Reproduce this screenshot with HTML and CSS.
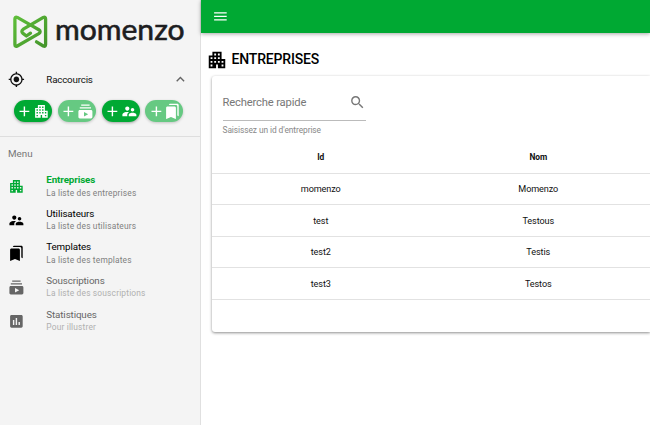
FILE: index.html
```
<!DOCTYPE html>
<html lang="fr">
<head>
    <meta charset="UTF-8">
    <meta name="viewport" content="width=device-width, initial-scale=1.0">
    <title>Momenzo - Entreprises</title>
    <link rel="stylesheet" href="styles.css">
</head>
<body>
    <svg class="defs" width="0" height="0">
        <symbol id="apartment" viewBox="0 0 24 24"><path d="M17 11V3H7v4H3v14h8v-4h2v4h8V11h-4zM7 19H5v-2h2v2zm0-4H5v-2h2v2zm0-4H5V9h2v2zm4 4H9v-2h2v2zm0-4H9V9h2v2zm0-4H9V5h2v2zm4 8h-2v-2h2v2zm0-4h-2V9h2v2zm0-4h-2V5h2v2zm4 12h-2v-2h2v2zm0-4h-2v-2h2v2z"/></symbol>
        <symbol id="users" viewBox="0 0 24 24"><path d="M16.5 12c1.38 0 2.49-1.12 2.49-2.5S17.88 7 16.5 7C15.12 7 14 8.12 14 9.5s1.12 2.5 2.5 2.5zM9 11c1.66 0 2.99-1.34 2.99-3S10.66 5 9 5C7.34 5 6 6.34 6 8s1.34 3 3 3zm7.5 3c-1.83 0-5.5.92-5.5 2.75V19h11v-2.25c0-1.83-3.67-2.75-5.5-2.75zM9 13c-2.33 0-7 1.17-7 3.5V19h7v-2.25c0-.85.33-2.34 2.37-3.47C10.5 13.1 9.66 13 9 13z"/></symbol>
        <symbol id="subscriptions" viewBox="0 0 24 24"><path d="M20 8H4V6h16v2zm-2-6H6v2h12V2zm4 10v8c0 1.1-.9 2-2 2H4c-1.1 0-2-.9-2-2v-8c0-1.1.9-2 2-2h16c1.1 0 2 .9 2 2zm-6 4l-6-3.27v6.53L16 16z"/></symbol>
        <symbol id="bookmarks" viewBox="0 0 24 24"><path d="M19 18l2 1V3c0-1.1-.9-2-2-2H8.99C7.89 1 7 1.9 7 3h10c1.1 0 2 .9 2 2v13zM15 5H5c-1.1 0-2 .9-2 2v16l7-3 7 3V7c0-1.1-.9-2-2-2z"/></symbol>
        <symbol id="stats" viewBox="0 0 24 24"><path d="M19 3H5c-1.1 0-2 .9-2 2v14c0 1.1.9 2 2 2h14c1.1 0 2-.9 2-2V5c0-1.1-.9-2-2-2zM9 17H7v-7h2v7zm4 0h-2V7h2v10zm4 0h-2v-4h2v4z"/></symbol>
        <symbol id="location" viewBox="0 0 24 24"><path d="M12 8c-2.21 0-4 1.79-4 4s1.79 4 4 4 4-1.79 4-4-1.79-4-4-4zm8.94 3c-.46-4.17-3.77-7.48-7.94-7.94V1h-2v2.06C6.83 3.52 3.52 6.83 3.06 11H1v2h2.06c.46 4.17 3.77 7.48 7.94 7.94V23h2v-2.06c4.17-.46 7.48-3.77 7.94-7.94H23v-2h-2.06zM12 19c-3.87 0-7-3.13-7-7s3.13-7 7-7 7 3.13 7 7-3.13 7-7 7z"/></symbol>
        <symbol id="chevron" viewBox="0 0 24 24"><path d="M7.41 15.41L12 10.83l4.59 4.58L18 14l-6-6-6 6z"/></symbol>
        <symbol id="plus" viewBox="0 0 24 24"><path d="M19 13h-6v6h-2v-6H5v-2h6V5h2v6h6v2z"/></symbol>
        <symbol id="search" viewBox="0 0 24 24"><path d="M15.5 14h-.79l-.28-.27C15.41 12.59 16 11.11 16 9.5 16 5.91 13.09 3 9.5 3S3 5.91 3 9.5 5.91 16 9.5 16c1.61 0 3.09-.59 4.23-1.57l.27.28v.79l5 4.99L20.49 19l-4.99-5zm-6 0C7.01 14 5 11.99 5 9.5S7.01 5 9.5 5 14 7.01 14 9.5 11.99 14 9.5 14z"/></symbol>
        <symbol id="menu" viewBox="0 0 24 24"><path d="M3 18h18v-2H3v2zm0-5h18v-2H3v2zm0-7v2h18V6H3z"/></symbol>
    </svg>

    <aside class="sidebar">
        <svg class="logo" width="200" height="63" viewBox="0 0 200 63">
            <defs>
                <linearGradient id="leaf" gradientUnits="userSpaceOnUse" x1="14" y1="16" x2="47" y2="47">
                    <stop offset="0" stop-color="#5fbf3a"/>
                    <stop offset="1" stop-color="#43932b"/>
                </linearGradient>
            </defs>
            <g fill="none" stroke="url(#leaf)" stroke-width="3.3" stroke-linecap="round" stroke-linejoin="round">
                <path d="M36.5 41.8L43.3 46Q45.6 47 45.6 44.5V19Q45.6 16.3 43.3 17.4L23.3 29.2Q20.6 31.4 23 33.4L26.4 36L30.5 33.2"/>
                <path d="M30 24.6L17.3 17.4Q14.9 16.3 14.9 19V44.5Q14.9 47.2 17.3 46L38.8 33.6Q41.5 31.6 38.8 29.7L30 24.6"/>
            </g>
            <text class="wordmark" x="55" y="39.5" textLength="129.5" lengthAdjust="spacingAndGlyphs">momenzo</text>
        </svg>

        <div class="shortcuts-header">
            <svg class="icon"><use href="#location"/></svg>
            <span>Raccourcis</span>
            <svg class="icon chevron"><use href="#chevron"/></svg>
        </div>
        <div class="shortcuts">
            <button class="pill"><svg><use href="#plus"/></svg><svg><use href="#apartment"/></svg></button>
            <button class="pill disabled"><svg><use href="#plus"/></svg><svg><use href="#subscriptions"/></svg></button>
            <button class="pill"><svg><use href="#plus"/></svg><svg><use href="#users"/></svg></button>
            <button class="pill disabled"><svg><use href="#plus"/></svg><svg><use href="#bookmarks"/></svg></button>
        </div>

        <nav class="menu">
            <div class="menu-label">Menu</div>
            <a class="item active">
                <svg class="icon"><use href="#apartment"/></svg>
                <div><div class="title">Entreprises</div><div class="subtitle">La liste des entreprises</div></div>
            </a>
            <a class="item">
                <svg class="icon"><use href="#users"/></svg>
                <div><div class="title">Utilisateurs</div><div class="subtitle">La liste des utilisateurs</div></div>
            </a>
            <a class="item">
                <svg class="icon"><use href="#bookmarks"/></svg>
                <div><div class="title">Templates</div><div class="subtitle">La liste des templates</div></div>
            </a>
            <a class="item disabled">
                <svg class="icon"><use href="#subscriptions"/></svg>
                <div><div class="title">Souscriptions</div><div class="subtitle">La liste des souscriptions</div></div>
            </a>
            <a class="item disabled">
                <svg class="icon"><use href="#stats"/></svg>
                <div><div class="title">Statistiques</div><div class="subtitle">Pour illustrer</div></div>
            </a>
        </nav>
    </aside>

    <div class="content">
        <header class="toolbar">
            <svg class="icon"><use href="#menu"/></svg>
        </header>
        <main>
            <h1><svg><use href="#apartment"/></svg>ENTREPRISES</h1>
            <section class="card">
                <div class="search">
                    <div class="search-field">
                        <span>Recherche rapide</span>
                        <svg class="icon"><use href="#search"/></svg>
                    </div>
                    <div class="hint">Saisissez un id d'entreprise</div>
                </div>
                <table>
                    <thead>
                        <tr><th>Id</th><th>Nom</th><th class="rest"></th></tr>
                    </thead>
                    <tbody>
                        <tr><td>momenzo</td><td>Momenzo</td><td></td></tr>
                        <tr><td>test</td><td>Testous</td><td></td></tr>
                        <tr><td>test2</td><td>Testis</td><td></td></tr>
                        <tr><td>test3</td><td>Testos</td><td></td></tr>
                    </tbody>
                </table>
            </section>
        </main>
    </div>
</body>
</html>
```
FILE: styles.css
```
* {
    box-sizing: border-box;
}

body {
    margin: 0;
    height: 425px;
    display: flex;
    overflow: hidden;
    font-family: Roboto, "Liberation Sans", sans-serif;
    color: #111;
    background-color: #fff;
}

svg {
    display: block;
    fill: currentColor;
    flex-shrink: 0;
}

.defs {
    position: absolute;
}

.icon {
    width: 16.8px;
    height: 16.8px;
}

/* Sidebar */
.sidebar {
    width: 201px;
    flex-shrink: 0;
    background-color: #f4f4f4;
    border-right: 1px solid #e0e0e0;
}

.wordmark {
    font-family: Lato, sans-serif;
    font-size: 29px;
    fill: #1d1d1f;
    stroke: #1d1d1f;
    stroke-width: 0.6px;
}

.shortcuts-header {
    display: flex;
    align-items: center;
    height: 33px;
    padding: 0 11px 0 8px;
    font-size: 9.8px;
    letter-spacing: -0.2px;
}

.shortcuts-header span {
    flex: 1;
    margin-left: 21.5px;
}

.shortcuts-header .chevron {
    color: #666;
}

.shortcuts {
    display: flex;
    gap: 5.8px;
    height: 41px;
    padding: 4px 0 0 14px;
    border-bottom: 1px solid #dedede;
}

.pill {
    display: flex;
    align-items: center;
    justify-content: center;
    width: 38px;
    height: 22px;
    padding: 0;
    border: none;
    border-radius: 11px;
    color: #fff;
    background-color: #00a933;
    box-shadow: 0 1px 3px rgba(0, 0, 0, 0.35);
}

.pill svg {
    width: 16.8px;
    height: 16.8px;
}

.pill.disabled {
    background-color: #66c982;
    box-shadow: 0 1px 3px rgba(0, 0, 0, 0.2);
}

.menu-label {
    height: 32.8px;
    line-height: 33px;
    padding-left: 8px;
    font-size: 9.8px;
    color: #777;
}

.item {
    display: flex;
    align-items: center;
    gap: 21.5px;
    height: 33.6px;
    padding-left: 8px;
    color: #000;
}

.title {
    font-size: 9.8px;
    line-height: 12.4px;
    letter-spacing: -0.12px;
}

.subtitle {
    font-size: 8.4px;
    line-height: 12.4px;
    letter-spacing: 0.17px;
    color: #808080;
}

.item.active .icon,
.item.active .title {
    color: #00a933;
    font-weight: bold;
}

.item.disabled {
    color: #666;
}

.item.disabled .subtitle {
    color: #b0b0b0;
}

/* Main area */
.content {
    flex: 1;
    min-width: 0;
}

.toolbar {
    display: flex;
    align-items: center;
    height: 33px;
    padding-left: 11px;
    color: #fff;
    background-color: #00a933;
    box-shadow: 0 1px 4px rgba(0, 0, 0, 0.35);
}

h1 {
    display: flex;
    align-items: center;
    gap: 3.5px;
    height: 22px;
    margin: 15px 0 6px 5px;
    font-size: 14px;
    font-weight: 500;
    letter-spacing: -0.17px;
    color: #000;
}

h1 svg {
    width: 22px;
    height: 22px;
    margin-top: 2px;
}

.card {
    height: 256px;
    margin-left: 11px;
    border-radius: 3px 0 0 3px;
    background-color: #fff;
    box-shadow: 0 1px 3px rgba(0, 0, 0, 0.45);
}

.search {
    width: 154px;
    height: 65px;
    padding: 9px 0 0 10.5px;
}

.search-field {
    display: flex;
    align-items: center;
    justify-content: space-between;
    height: 36px;
    border-bottom: 1px solid #bbb;
    font-size: 11.2px;
    letter-spacing: -0.15px;
    color: #777;
}

.hint {
    margin-top: 4px;
    font-size: 8.4px;
    line-height: 10px;
    letter-spacing: -0.08px;
    color: #888;
}

table {
    width: 100%;
    table-layout: fixed;
    border-collapse: collapse;
    text-align: center;
}

th,
td {
    height: 31.6px;
    padding: 0;
    border-bottom: 1px solid #e2e2e2;
    font-size: 9.1px;
    letter-spacing: -0.1px;
}

th {
    width: 217.5px;
    height: 32.2px;
    font-size: 8.4px;
    font-weight: bold;
}

th.rest {
    width: auto;
}
```
